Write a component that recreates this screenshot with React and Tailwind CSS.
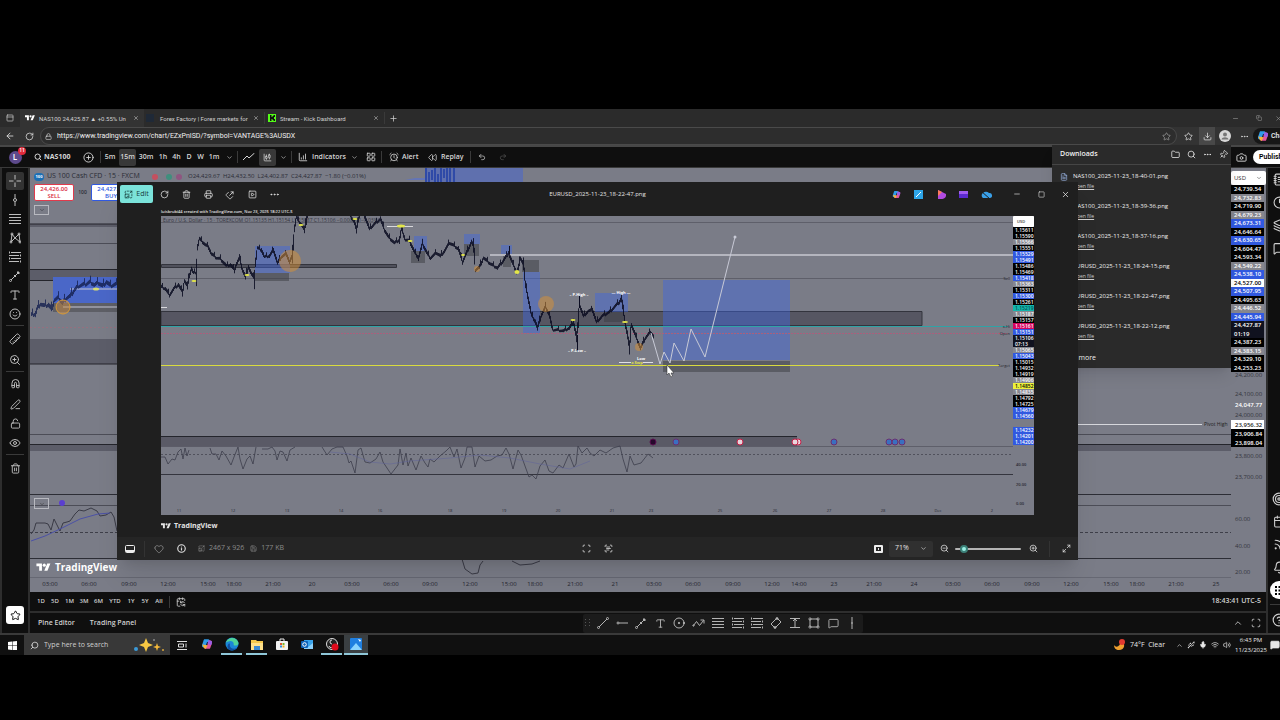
import React, { useState } from "react";
import {
  AlarmClock, ArrowLeft, Camera, Calendar, CalendarSync, ChartCandlestick, ChartColumnIncreasing,
  ChevronDown, ChevronUp, Bell, CircleHelp, CirclePlus, Clock, Copy, Download, Ellipsis, Eye,
  FileText, Folder, Heart, Info, LayoutGrid, Layers, Lock, LockOpen, Magnet, Maximize2, MessageSquare, Mic,
  Minus, NotebookText, PanelTop, PenLine, Pin, Plus, Printer, Redo2, RotateCw, Rss, Ruler, Scan, ScanText,
  Search, Share, Smile, Square, Star, Target, Trash2, Type, Undo2, Volume2, Wifi, X,
  ZoomIn, ZoomOut, Rewind, SquarePlay, Save, ImageUpscale, Usb,
} from "lucide-react";

// Main chart labels, top to bottom: [price, style]
const prices = [
  ["24,739.54", "k"], ["24,732.83", "g"], ["24,719.90", "k"], ["24,679.23", "g"], ["24,673.31", "b"],
  ["24,646.64", "k"], ["24,630.65", "b"], ["24,604.47", "k"], ["24,593.34", "k"], ["24,549.22", "g"],
  ["24,538.10", "b"], ["24,527.00", "w"], ["24,507.95", "b"], ["24,495.63", "k"], ["24,446.52", "g"],
  ["24,445.94", "b"], ["24,427.87", "n"], ["01:19", "n"], ["24,387.23", "k"], ["24,383.15", "g"],
  ["24,329.10", "k"], ["24,253.23", "k"],
];

const viewerPrices = [
  ["1.15611", "k"], ["1.15590", "k"], ["1.15566", "g"], ["1.15551", "k"], ["1.15529", "b"], ["1.15491", "b"],
  ["1.15486", "k"], ["1.15469", "k"], ["1.15418", "b"], ["1.15363", "g"], ["1.15311", "k"], ["1.15300", "b"],
  ["1.15261", "k"], ["1.15219", "t"], ["1.15187", "g"], ["1.15157", "k"], ["1.15161", "p"], ["1.15151", "b"],
  ["1.15106", "n"], ["07:13", "n"], ["1.15065", "g"], ["1.15043", "b"], ["1.15015", "k"], ["1.14932", "k"],
  ["1.14919", "k"], ["1.14906", "g"], ["1.14852", "y"], ["1.14835", "g"], ["1.14792", "k"], ["1.14725", "k"],
  ["1.14679", "b"], ["1.14560", "b"],
];

const tone = {
  k: "bg-black text-white",
  g: "bg-[#85868e] text-white",
  b: "bg-[#3159e0] text-white",
  w: "bg-white text-black",
  n: "bg-[#10121f] text-white",
  t: "bg-[#12b5ac] text-[#08504c]",
  p: "bg-[#d6045f] text-white",
  y: "bg-[#eef03c] text-black",
};

const times = [
  [50, "03:00"], [89, "06:00"], [129, "09:00"], [168, "12:00"], [208, "15:00"], [234, "18:00"], [273, "21:00"],
  [312, "20"], [352, "03:00"], [391, "06:00"], [430, "09:00"], [470, "12:00"], [509, "15:00"], [535, "18:00"],
  [575, "21:00"], [615, "21"], [654, "03:00"], [693, "06:00"], [733, "09:00"], [772, "12:00"], [799, "14:00"],
  [834, "23"], [874, "21:00"], [914, "24"], [953, "03:00"], [992, "06:00"], [1032, "09:00"], [1071, "12:00"],
  [1111, "15:00"], [1137, "18:00"], [1176, "21:00"], [1216, "25"],
];

const days = [
  [179, "11"], [233, "12"], [287, "13"], [341, "14"], [380, "16"], [450, "18"], [504, "19"], [558, "20"],
  [612, "21"], [651, "23"], [720, "25"], [775, "26"], [829, "27"], [883, "28"], [938, "Dec"], [992, "2"],
];

const eurusd = [
  [161, 287], [165, 289], [169, 295], [174, 288], [178, 285], [182, 292], [184, 281], [187, 286], [189, 275],
  [191, 269], [193, 273], [196, 272], [197, 247], [199, 239], [202, 242], [205, 245], [208, 247], [211, 254],
  [216, 258], [220, 259], [226, 266], [230, 265], [234, 270], [236, 264], [239, 258], [242, 270], [245, 277],
  [248, 267], [251, 274], [254, 279], [255, 262], [257, 248], [261, 250], [264, 257], [269, 256], [273, 250],
  [277, 263], [281, 257], [286, 254], [289, 262], [292, 256], [294, 228], [296, 217], [298, 221], [302, 226],
  [304, 230], [306, 220], [309, 200], [346, 200], [350, 216], [354, 222], [356, 230], [358, 219], [361, 208],
  [365, 218], [369, 229], [374, 224], [380, 219], [384, 230], [388, 237], [394, 243], [399, 240], [401, 229],
  [405, 240], [409, 241], [414, 252], [418, 258], [422, 244], [427, 254], [430, 258], [436, 253], [440, 256],
  [444, 251], [449, 243], [454, 246], [458, 249], [462, 262], [466, 253], [471, 242], [473, 246], [475, 270],
  [479, 267], [483, 258], [490, 264], [497, 268], [502, 262], [508, 253], [512, 263], [516, 272], [518, 268],
  [520, 258], [523, 264], [525, 285], [528, 300], [531, 315], [535, 322], [537, 328], [541, 315], [545, 307],
  [549, 315], [552, 330], [557, 330], [563, 331], [569, 328], [573, 322], [576, 337], [578, 320], [579, 305],
  [583, 316], [588, 311], [592, 310], [596, 322], [602, 316], [609, 312], [614, 307], [619, 302], [621, 298],
  [623, 312], [625, 325], [627, 335], [629, 348], [631, 325], [636, 338], [640, 348], [645, 338], [650, 332],
  [654, 338],
];

const nas = [
  [31, 315], [35, 314], [37, 308], [40, 304], [44, 306], [48, 305], [51, 309], [54, 300], [58, 298], [62, 303],
  [66, 298], [70, 296], [74, 290], [78, 286], [82, 285], [86, 284], [90, 282], [94, 285], [98, 283], [102, 286],
  [106, 282], [110, 286], [117, 284],
];

// Rough candles: short bodies along the close line with a longer wick now and then
function candles(points, spread) {
  let d = "";
  for (let i = 0; i < points.length - 1; i++) {
    const [x0, y0] = points[i];
    const [x1, y1] = points[i + 1];
    for (let x = x0; x < x1; x++) {
      const y = y0 + ((y1 - y0) * (x - x0)) / (x1 - x0);
      const step = Math.abs((y1 - y0) / (x1 - x0)) / 2;
      const n = ((x * 7919) % 13) / 13;
      const wick = n > 0.8 ? spread : 0;
      const up = step + 0.4 + n * spread + wick;
      const down = step + 0.4 + (1 - n) * spread * 0.7;
      d += `M${x}.5 ${(y - up).toFixed(1)}V${(y + down).toFixed(1)}`;
    }
  }
  return d;
}

const rsi =
  "161,457 165,457 168,464 172,459 175,460 178,452 181,449 183,459 185,448 187,456 189,450 M210,448 212,454 216,454 219,460 222,451 226,456 231,465 234,457 238,447 240,459 243,469 247,459 250,456 253,464 256,447 M262,449 268,449 272,447 275,451 277,460 280,451 283,452 287,461 290,450 295,447 M322,447 327,455 332,449 337,447 343,447 347,456 349,463 351,461 355,473 358,450 361,448 365,462 370,463 376,459 380,452 383,462 387,468 391,474 398,465 400,449 403,465 406,453 408,466 411,458 416,470 421,456 425,463 428,467 430,459 434,462 440,456 446,451 450,447 454,457 457,449 461,468 465,458 467,447 472,447 475,467 479,456 485,461 491,460 497,456 502,455 506,448 509,454 513,469 518,450 521,455 525,466 529,477 532,475 536,479 540,466 545,460 549,471 553,473 559,465 563,468 569,454 574,467 576,464 578,446 582,453 587,448 590,453 594,456 600,450 606,453 613,448 620,446 623,459 627,472 630,456 634,465 641,463 648,454 653,458";

const toPath = (s) => s.split(" ").map((p) => (p[0] === "M" ? p : "L" + p)).join(" ").replace("L", "M");

function IconBtn({ label, className = "", children }) {
  return (
    <button type="button" aria-label={label} className={`flex shrink-0 items-center justify-center ${className}`}>
      {children}
    </button>
  );
}

const Rule = () => <div className="h-3 w-px shrink-0 bg-[#3a3a3a]" />;

function TvLogo({ className }) {
  return (
    <svg viewBox="0 0 36 28" className={className} fill="currentColor">
      <path d="M14 22H7V11H0V4h14v18zM28 22h-8l7.500-18h8L28 22z" />
      <circle cx="20" cy="8" r="4" />
    </svg>
  );
}

function Copilot({ className }) {
  return (
    <svg viewBox="0 0 20 20" className={className}>
      <path d="M6 2h6c2 0 2.500 2 3 4l-5 1-3 9H5c-3 0-4-2-3-5l2-6c.4-2 1-3 2-3z" fill="#2f9be8" />
      <path d="M14 18H8c-2 0-2.500-2-3-4l5-1 3-9h2c3 0 4 2 3 5l-2 6c-.4 2-1 3-2 3z" fill="#e2559b" />
      <path d="M12 4h3c3 0 4 2 3 5l-1 3-6-2z" fill="#9b5de5" />
      <path d="M2 11l2 4c1 2 2 3 4 3l3-6z" fill="#f3b13c" />
    </svg>
  );
}

function Tabs() {
  return (
    <div className="flex h-[18px] items-center bg-[#2b2b2b] font-['Roboto',sans-serif] text-[6px] text-[#d0d0d0]">
      <IconBtn label="Tab actions" className="w-5"><PanelTop size={8} /></IconBtn>
      <div className="flex h-full w-[124px] items-center bg-[#333] pl-[5px]">
        <TvLogo className="mr-1 h-2 w-[10px] shrink-0 text-white" />
        <span className="w-[89px] whitespace-nowrap">NAS100 24,425.87 ▲ +0.55% Un</span>
        <IconBtn label="Close tab" className="w-4"><X size={6} /></IconBtn>
      </div>
      <div className="flex h-full w-[120px] items-center pl-[2px]">
        <span className="mr-[6px] h-2 w-2 shrink-0 bg-[#1f2937]" />
        <span className="w-[88px] whitespace-nowrap">Forex Factory | Forex markets for</span>
        <IconBtn label="Close tab" className="w-4"><X size={6} /></IconBtn>
      </div>
      <Rule />
      <div className="flex h-full w-[119px] items-center pl-[3px]">
        <svg viewBox="0 0 8 8" className="mr-1 h-2 w-2">
          <path d="M0 0h8v8H0z" fill="#53fc18" />
          <path d="M2 1h1.500v2h1V2h1V1h1.500v2h-1v2h1v2H5.500V6h-1V5h-1v2H2z" fill="#111" />
        </svg>
        <span className="w-[88px] whitespace-nowrap">Stream - Kick Dashboard</span>
        <IconBtn label="Close tab" className="w-4"><X size={6} /></IconBtn>
      </div>
      <Rule />
      <IconBtn label="New tab" className="w-4"><Plus size={9} /></IconBtn>
      <div className="ml-auto flex">
        <IconBtn label="Minimize" className="w-6 text-[#999]"><Minus size={7} /></IconBtn>
        <IconBtn label="Restore" className="w-6 text-[#999]"><Copy size={6} /></IconBtn>
        <div className="flex w-[9px] justify-end overflow-hidden">
          <IconBtn label="Close" className="w-1 text-[#999]"><X size={7} className="shrink-0" /></IconBtn>
        </div>
      </div>
    </div>
  );
}

function AddressBar() {
  return (
    <div className="flex h-5 items-center border-b-2 border-[#474747] bg-[#333] text-[#e2e2e2]">
      <IconBtn label="Back" className="w-5"><ArrowLeft size={10} /></IconBtn>
      <IconBtn label="Reload" className="w-[18px]"><RotateCw size={9} /></IconBtn>
      <div className="ml-[2px] flex h-full min-w-0 flex-1 items-center rounded-full border border-[#4a4a4a] bg-[#2d2d2d] pr-1 pl-1">
        <Lock size={7} className="mr-[5px] shrink-0" />
        <input
          aria-label="Address"
          className="min-w-0 flex-1 bg-transparent font-['Roboto',sans-serif] text-[7px] text-[#f0f0f0] outline-none"
          defaultValue="https://www.tradingview.com/chart/EZxPnISD/?symbol=VANTAGE%3AUSDX"
        />
        <IconBtn label="Favorite" className="w-3 text-[#9a9a9a]"><Star size={9} /></IconBtn>
      </div>
      <IconBtn label="Favorites" className="w-[22px]"><Star size={9} /></IconBtn>
      <IconBtn label="Downloads" className="h-full w-4 bg-[#484848]"><Download size={9} /></IconBtn>
      <IconBtn label="Profile" className="w-5">
        <svg viewBox="0 0 12 12" className="h-3 w-3">
          <circle cx="6" cy="6" r="6" fill="#d8d8d8" />
          <circle cx="6" cy="4.600" r="2" fill="#777" />
          <path d="M2.500 9.500c.5-3 6.500-3 7 0z" fill="#777" />
        </svg>
      </IconBtn>
      <IconBtn label="Settings" className="w-[18px]"><Ellipsis size={9} /></IconBtn>
      <button type="button" className="flex h-4 w-[27px] shrink-0 items-center gap-[2px] overflow-hidden rounded-l-full bg-[#171717] pl-1 font-['Roboto',sans-serif] text-[7px] font-semibold">
        <Copilot className="h-3 w-3 shrink-0" />
        Chat
      </button>
    </div>
  );
}

function TopToolbar() {
  const [frame, setFrame] = useState("15m");
  const frames = [
    ["5m", "w-[18px]"], ["15m", "w-[17px]"], ["30m", "w-5"], ["1h", "w-[14px]"], ["4h", "w-[13px]"],
    ["D", "w-3"], ["W", "w-[11px]"], ["1m", "w-4"],
  ];
  return (
    <div className="flex h-[21px] items-center border-b border-[#3a3a3a] bg-[#0f0f0f] text-[7px] font-semibold text-[#d6d6d6]">
      <button type="button" aria-label="Account" className="relative flex w-[30px] justify-center">
        <span className="flex h-[13px] w-[13px] items-center justify-center rounded-full bg-[#5d4a8c] text-[8px] text-white">L</span>
        <span className="absolute -top-1 left-[18px] flex h-2 w-2 items-center justify-center rounded-full bg-[#e0293a] text-[5px] text-white">11</span>
      </button>
      <button type="button" className="flex w-[46px] items-center gap-[2px] pl-1 font-bold"><Search size={8} strokeWidth={3} />NAS100</button>
      <IconBtn label="Compare" className="w-6"><CirclePlus size={11} /></IconBtn>
      <Rule />
      {frames.map(([f, w]) => (
        <button
          key={f}
          type="button"
          onClick={() => setFrame(f)}
          className={`${w} h-[17px] shrink-0 rounded-[2px] text-center ${frame === f ? "bg-[#383838]" : ""}`}
        >
          {f}
        </button>
      ))}
      <IconBtn label="More intervals" className="w-[15px]"><ChevronDown size={7} /></IconBtn>
      <Rule />
      <IconBtn label="Line" className="w-[21px]">
        <svg viewBox="0 0 12 8" className="h-2 w-3" fill="none" stroke="currentColor"><path d="M0 7l4-4 2 2 5.500-5" /></svg>
      </IconBtn>
      <IconBtn label="Candles" className="h-[17px] w-[17px] rounded-[2px] bg-[#383838]"><ChartCandlestick size={9} /></IconBtn>
      <IconBtn label="Chart type" className="w-[15px]"><ChevronDown size={7} /></IconBtn>
      <Rule />
      <button type="button" className="flex w-[57px] items-center gap-1 pl-[6px]"><ChartColumnIncreasing size={10} />Indicators</button>
      <IconBtn label="Favorite indicators" className="w-[11px]"><ChevronDown size={7} /></IconBtn>
      <IconBtn label="Templates" className="w-[21px]"><LayoutGrid size={10} /></IconBtn>
      <Rule />
      <button type="button" className="flex w-[43px] items-center gap-[3px] pl-[7px]"><AlarmClock size={10} />Alert</button>
      <button type="button" className="flex w-[45px] items-center gap-1 pl-[3px]"><Rewind size={9} className="-scale-x-100 rotate-180" />Replay</button>
      <Rule />
      <IconBtn label="Undo" className="w-[22px]"><Undo2 size={8} /></IconBtn>
      <IconBtn label="Redo" className="w-5 text-[#555]"><Redo2 size={8} /></IconBtn>
      <div className="ml-auto flex items-center">
        <IconBtn label="Snapshot" className="w-6"><Camera size={11} /></IconBtn>
        <button type="button" className="h-[14px] w-[27px] overflow-hidden rounded-l-full bg-white pl-[6px] text-left font-['Roboto',sans-serif] text-black">Publish</button>
      </div>
    </div>
  );
}

function FibIcon({ dots, size = "h-3 w-3" }) {
  return (
    <svg viewBox="0 0 12 12" className={size} fill="none" stroke="currentColor">
      {dots ? (
        <path d="M2 1.500h10M0 4.500h10M2 7.500h10M0 10.500h10" />
      ) : (
        <path d="M0 1.500h12M0 4.500h12M0 7.500h12M0 10.500h12" />
      )}
      {dots && <path d="M0 1.500h1M11 4.500h1M0 7.500h1M11 10.500h1" strokeWidth="2" />}
    </svg>
  );
}

function PatternIcon() {
  return (
    <svg viewBox="0 0 12 12" className="h-3 w-3" fill="none" stroke="currentColor">
      <path d="M2 10L3 2l3 4 4-4 1 8-5-4-4 4z" />
      <circle cx="2" cy="10" r="1" /><circle cx="3" cy="2" r="1" /><circle cx="10" cy="2" r="1" /><circle cx="11" cy="10" r="1" />
    </svg>
  );
}

function TrendIcon({ arrow }) {
  return (
    <svg viewBox="0 0 12 12" className="h-3 w-3" fill="none" stroke="currentColor">
      <path d="M2 10l8-8" />
      {arrow ? <path d="M8 2h2v2zM5 5l2 2" fill="currentColor" /> : null}
      <circle cx="1.500" cy="10.500" r="1" />
      {!arrow && <circle cx="10.500" cy="1.500" r="1" />}
    </svg>
  );
}

function LeftToolbar() {
  const cell = "h-[19px] w-[18px]";
  const line = "my-[2px] h-px w-[18px] bg-[#3a3a3a]";
  return (
    <aside className="flex w-[30px] shrink-0 flex-col items-center border-r-2 border-l-2 border-[#2e2e2e] bg-[#0f0f0f] pt-1 text-[#bdbdbd]">
      <IconBtn label="Cursor" className="h-[18px] w-[18px] rounded-[2px] bg-[#333]">
        <svg viewBox="0 0 12 12" className="h-3 w-3" stroke="currentColor"><path d="M6 0v4.500M6 7.500V12M0 6h4.500M7.500 6H12" /></svg>
      </IconBtn>
      <IconBtn label="Vertical line" className={cell}>
        <svg viewBox="0 0 12 12" className="h-3 w-3" stroke="currentColor" fill="none"><path d="M6 0v4M6 8v4" /><circle cx="6" cy="6" r="1.500" /></svg>
      </IconBtn>
      <IconBtn label="Fib retracement" className={cell}><FibIcon /></IconBtn>
      <IconBtn label="Patterns" className={cell}><PatternIcon /></IconBtn>
      <IconBtn label="Projection" className={cell}><FibIcon dots /></IconBtn>
      <IconBtn label="Brush" className={cell}><TrendIcon arrow /></IconBtn>
      <IconBtn label="Text" className={cell}><Type size={12} /></IconBtn>
      <IconBtn label="Icons" className={cell}><Smile size={12} /></IconBtn>
      <div className={line} />
      <IconBtn label="Measure" className="h-[22px] w-[18px]"><Ruler size={12} className="rotate-90" /></IconBtn>
      <IconBtn label="Zoom in" className={cell}><ZoomIn size={12} /></IconBtn>
      <div className={line} />
      <IconBtn label="Magnet" className="h-[21px] w-[18px]"><Magnet size={11} className="-rotate-45" /></IconBtn>
      <IconBtn label="Stay in drawing mode" className={cell}><PenLine size={11} /></IconBtn>
      <IconBtn label="Lock drawings" className={cell}><LockOpen size={11} /></IconBtn>
      <IconBtn label="Hide drawings" className={cell}><Eye size={12} /></IconBtn>
      <div className={line} />
      <IconBtn label="Remove" className="h-[22px] w-[18px]"><Trash2 size={11} /></IconBtn>
      <IconBtn label="Favorites toolbar" className="mt-auto mb-[9px] h-[18px] w-[18px] rounded-[3px] bg-white text-black"><Star size={11} /></IconBtn>
    </aside>
  );
}

function MainChart() {
  return (
    <svg viewBox="30 168 1201 409" preserveAspectRatio="xMinYMin slice" className="block h-[409px] w-full bg-[#7a7c87]">
      <path d="M30 224h1201v3H30zM30 269h1201v12H30zM30 339h1201v25H30zM30 445h1201v6H30z" fill="#5c5d69" />
      <path d="M30 224h1201M30 269.500h1201M30 280.500h1201M30 364h1201M30 444.500h1201" stroke="#24252c" />
      <path d="M30 243.500h1201M30 434.500h1201M30 505.500h1201" stroke="#4c4d57" />
      <path d="M405 180h20v-2h-10z" fill="#6475b5" />
      <path d="M425 168h98v16h-98z" fill="#5f70ae" />
      <path d="M426 168v15M429 172v12M432 170v10M435 168v14M438 174v9M441 168v15M444 169v9M447 168v15M450 168v15M454 168v16" stroke="#1c3aa5" strokeWidth="2" opacity="0.7" />
      <rect x="53" y="277" width="70" height="26" fill="#4a67c8" />
      <rect x="53" y="303" width="70" height="9" fill="#5e5f66" />
      <path d="M70 289h50M63 307h60" stroke="#c4c6d4" />
      <path d={candles(nas, 3)} stroke="#152050" opacity="0.8" />
      <circle cx="63" cy="307" r="7" fill="#c98a3f" fillOpacity="0.5" stroke="#d99a35" />
      <ellipse cx="96" cy="289" rx="3" ry="1.500" fill="#d7dc72" />
      <path d="M30 327.500h90" stroke="#94707f" strokeDasharray="2 2" />
      <path d="M1070 424.500h132" stroke="#d6d7dc" />
      <text x="1204" y="426" fontSize="5" fill="#222">Pivot High</text>
      <path d="M30 494.500h1201M30 558.500h1201" stroke="#2c2d35" />
      <path d="M30 532.500h1201" stroke="#3e3f49" strokeDasharray="3 2" />
      <path d="M31 534l3-4 2-7h9l3 1 3 6 3-11 3 6 3 6 3-8 4-1 3-1 5-7 4-4 5 1 7-3 6 3 3 5 6-1 5-3 3 5 3 14" fill="none" stroke="#3a3b46" />
      <path d="M31 541l14-5 15-7 20-10 18-5 12-1" fill="none" stroke="#4b51a6" />
      <path d="M462 559l3 10 7 5 6-1 2-8 3-4M512 561l8 4 12-1 8-3" fill="none" stroke="#3a3b46" />
    </svg>
  );
}

function PriceAxis() {
  return (
    <div className="flex h-[424px] w-[35px] shrink-0 flex-col bg-[#7a7c87] text-[6px] text-[#33343c]">
      <div className="flex h-[17px] items-end">
        <div className="relative h-[14px] w-full rounded-[2px] bg-white text-[#333]">
          <select aria-label="Currency" className="block h-full w-full appearance-none pl-[3px] text-[6px]">
            <option>USD</option>
          </select>
          <ChevronDown size={6} className="absolute top-1 right-1" />
        </div>
      </div>
      <div className="flex h-[187px] w-[33px] flex-col">
        {prices.map(([p, t]) => (
          <div key={p} className={`flex min-h-0 flex-1 items-center pl-[3px] leading-none font-semibold ${tone[t]}`}>{p}</div>
        ))}
      </div>
      <div className="flex flex-col pl-1">
        <span className="h-[7px] leading-[7px]">24,200.00</span>
        <span className="h-[21px] pt-[11px] leading-[9px]">24,100.00</span>
        <span className="h-[10px] leading-[10px] font-semibold text-white">24,047.77</span>
        <span className="h-[10px] leading-[10px]">24,000.00</span>
      </div>
      <div className="flex w-[33px] flex-col leading-none font-semibold">
        <span className="flex h-[9px] items-center bg-white pl-1 text-[#222]">23,956.32</span>
        <span className="flex h-[9px] items-center bg-black pl-1 text-white">23,906.84</span>
        <span className="flex h-[9px] items-center bg-black pl-1 text-white">23,898.04</span>
      </div>
      <div className="flex flex-1 flex-col pl-1 leading-3">
        <span className="h-6 pt-[3px]">23,800.00</span>
        <span className="h-[42px]">23,700.00</span>
        <span className="h-[27px]">60.00</span>
        <span className="h-[26px]">40.00</span>
        <span>20.00</span>
      </div>
    </div>
  );
}

function ChartHeader() {
  return (
    <div className="absolute top-0 left-0 pt-[3px] pl-1 text-[7px] whitespace-nowrap text-[#2b2c36]">
      <div className="flex h-[11px] items-center">
        <span className="mr-[3px] h-2 w-[10px] rounded-full bg-[#1b6fb5] text-center text-[4px] leading-2 font-bold text-white">100</span>
        <span className="w-[105px]">US 100 Cash CFD · 15 · FXCM</span>
        <span className="mr-2 h-[6px] w-[6px] rounded-full bg-[#c4505f]" />
        <span className="mr-1 h-[6px] w-[6px] rounded-full bg-[#3f8f7d]" />
        <span className="mr-[6px] h-[6px] w-[6px] rounded-full bg-[#8f5580]" />
        <span className="text-[6px]">O24,429.67&nbsp; H24,432.50&nbsp; L24,402.87&nbsp; C24,427.87&nbsp; −1.80 (−0.01%)</span>
      </div>
      <div className="mt-[2px] flex items-center text-center text-[6px] leading-[7px] font-semibold">
        <button type="button" className="h-[17px] w-10 rounded-[2px] border border-[#e03a4c] bg-white text-[#d8283c]">24,426.00<br />SELL</button>
        <span className="w-[17px] text-[5px]">100</span>
        <button type="button" className="h-[17px] w-10 rounded-[2px] border border-[#3159e0] bg-white text-[#3159e0]">24,427.80<br />BUY</button>
      </div>
      <IconBtn label="Collapse" className="mt-1 h-[10px] w-[15px] border border-[#b8b9c0]"><ChevronDown size={6} /></IconBtn>
    </div>
  );
}

function RightToolbar() {
  const cell = "h-[23px] w-[18px]";
  return (
    <aside className="flex w-[14px] shrink-0 flex-col overflow-hidden border-l-2 border-[#2e2e2e] bg-[#0f0f0f] pl-[2px] text-[#cfcfcf]">
      <IconBtn label="Watchlist" className={cell}><NotebookText size={13} /></IconBtn>
      <IconBtn label="Alerts" className={cell}><Clock size={13} /></IconBtn>
      <IconBtn label="Object tree" className={cell}><Layers size={13} /></IconBtn>
      <IconBtn label="Chats" className={cell}><MessageSquare size={13} /></IconBtn>
      <div className="mt-auto flex flex-col pb-[2px]">
        <IconBtn label="Screener" className={cell}><Target size={14} /></IconBtn>
        <IconBtn label="Calendar" className={cell}><Calendar size={13} /></IconBtn>
        <IconBtn label="News" className={cell}><Rss size={13} /></IconBtn>
        <IconBtn label="Notifications" className={cell}><Bell size={13} /></IconBtn>
        <IconBtn label="Products" className="my-[2px] h-[18px] w-[18px] rounded-full bg-white text-black">
          <svg viewBox="0 0 9 9" className="h-[9px] w-[9px]" fill="currentColor">
            <path d="M0 0h2v2H0zM3.500 0h2v2h-2zM7 0h2v2H7zM0 3.500h2v2H0zM3.500 3.500h2v2h-2zM7 3.500h2v2H7zM0 7h2v2H0zM3.500 7h2v2h-2zM7 7h2v2H7z" />
          </svg>
        </IconBtn>
        <div className="my-[3px] h-px w-[18px] bg-[#3a3a3a]" />
        <IconBtn label="Help" className={cell}><CircleHelp size={14} /></IconBtn>
      </div>
    </aside>
  );
}

function DrawingBar() {
  const cell = "h-full w-[19px]";
  return (
    <div className="flex h-[19px] w-[280px] shrink-0 items-center rounded-[2px] bg-[#1b1b1b] text-[#b4b4b4]">
      <svg viewBox="0 0 6 9" className="mr-[3px] ml-[2px] h-[9px] w-[6px] shrink-0" fill="#555">
        <path d="M0 0h1v1H0zM4 0h1v1H4zM0 3h1v1H0zM4 3h1v1H4zM0 6h1v1H0zM4 6h1v1H4z" />
      </svg>
      <IconBtn label="Trend line" className={cell}><TrendIcon /></IconBtn>
      <IconBtn label="Horizontal ray" className={cell}>
        <svg viewBox="0 0 12 12" className="h-3 w-3" fill="none" stroke="currentColor"><path d="M3 6h9" /><circle cx="2" cy="6" r="1" /></svg>
      </IconBtn>
      <IconBtn label="Arrow" className={cell}><TrendIcon arrow /></IconBtn>
      <IconBtn label="Text" className={cell}><Type size={11} /></IconBtn>
      <IconBtn label="Circle" className={cell}>
        <svg viewBox="0 0 12 12" className="h-3 w-3" fill="none" stroke="currentColor"><circle cx="6" cy="6" r="5" /><circle cx="6" cy="6" r=".7" fill="currentColor" /><circle cx="11" cy="6" r=".7" fill="currentColor" /></svg>
      </IconBtn>
      <IconBtn label="Path" className="h-full w-5">
        <svg viewBox="0 0 13 12" className="h-3 w-[13px]" fill="none" stroke="currentColor"><path d="M1.500 8.500l3-4 3 4 4-5M8.500 3h3.500v3.500" /><circle cx="1.500" cy="8.500" r=".7" /></svg>
      </IconBtn>
      <IconBtn label="Fib" className={cell}><FibIcon /></IconBtn>
      <IconBtn label="Long position" className="h-full w-[20px]"><FibIcon dots /></IconBtn>
      <IconBtn label="Short position" className={cell}><FibIcon dots /></IconBtn>
      <IconBtn label="Rotated rectangle" className={cell}>
        <svg viewBox="0 0 12 12" className="h-3 w-3" fill="none" stroke="currentColor"><path d="M1 7l6-6 4 4-6 6z" /><circle cx="7" cy="1.500" r="1" /><circle cx="5" cy="10.500" r="1" /></svg>
      </IconBtn>
      <IconBtn label="Price range" className={cell}>
        <svg viewBox="0 0 12 12" className="h-3 w-3" fill="none" stroke="currentColor"><path d="M1 1.500h10M1 10.500h10M6 2v8M4 4l2-2 2 2" /></svg>
      </IconBtn>
      <IconBtn label="Rectangle" className={cell}>
        <svg viewBox="0 0 12 12" className="h-3 w-3" fill="none" stroke="currentColor"><path d="M2 2h8v8H2z" /><path d="M1 1h2v2H1zM9 1h2v2H9zM1 9h2v2H1zM9 9h2v2H9z" strokeWidth=".7" /></svg>
      </IconBtn>
      <IconBtn label="Callout" className={cell}><MessageSquare size={11} /></IconBtn>
      <IconBtn label="Vertical line" className={cell}>
        <svg viewBox="0 0 12 12" className="h-3 w-3" fill="none" stroke="currentColor"><path d="M6 0v12M5 6h2" /></svg>
      </IconBtn>
    </div>
  );
}

function ChartFooter() {
  const ranges = [
    ["1D", "w-[14px]"], ["5D", "w-[14px]"], ["1M", "w-[15px]"], ["3M", "w-[14px]"], ["6M", "w-[15px]"],
    ["YTD", "w-[18px]"], ["1Y", "w-[14px]"], ["5Y", "w-[14px]"], ["All", "w-[14px]"],
  ];
  return (
    <div className="bg-[#0f0f0f] font-semibold text-[#cfcfcf]">
      <div className="flex h-[21px] items-center border-b-2 border-[#2e2e2e] pl-1 text-[6px]">
        {ranges.map(([r, w]) => (
          <button key={r} type="button" className={`${w} text-center`}>{r}</button>
        ))}
        <div className="ml-[3px] h-3 w-px bg-[#3a3a3a]" />
        <IconBtn label="Go to date" className="w-[22px]"><CalendarSync size={10} /></IconBtn>
        <span className="ml-auto pr-[5px] text-[7px]">18:43:41 UTC-5</span>
      </div>
      <div className="flex h-5 items-center text-[7px]">
        <div className="flex grow-[552] basis-0 gap-[15px] pl-2">
          <button type="button">Pine Editor</button>
          <button type="button">Trading Panel</button>
        </div>
        <DrawingBar />
        <div className="flex grow-[404] basis-0 justify-end gap-2 pr-[5px]">
          <IconBtn label="Expand panel"><ChevronUp size={10} /></IconBtn>
          <IconBtn label="Maximize panel"><Scan size={10} /></IconBtn>
        </div>
      </div>
    </div>
  );
}

function Downloads() {
  const files = [
    "NAS100_2025-11-23_18-40-01.png", "NAS100_2025-11-23_18-39-36.png", "NAS100_2025-11-23_18-37-16.png",
    "EURUSD_2025-11-23_18-24-15.png", "EURUSD_2025-11-23_18-22-47.png", "EURUSD_2025-11-23_18-22-12.png",
  ];
  return (
    <section className="absolute top-[36px] right-[49px] z-10 h-[223px] w-[179px] bg-[#2a2a2a] text-[6px] text-[#f0f0f0] shadow-lg">
      <header className="flex h-5 items-center border-b border-[#454545] pl-2">
        <h2 className="flex-1 text-[7px] font-semibold">Downloads</h2>
        <IconBtn label="Open folder" className="w-4"><Folder size={9} /></IconBtn>
        <IconBtn label="Search downloads" className="w-4"><Search size={9} /></IconBtn>
        <IconBtn label="More" className="w-4"><Ellipsis size={9} /></IconBtn>
        <IconBtn label="Pin" className="w-4"><Pin size={9} className="rotate-45" /></IconBtn>
      </header>
      <ul className="pt-[7px]">
        {files.map((f) => (
          <li key={f} className="flex h-[30px] gap-[5px] pl-2">
            <FileText size={8} className="mt-px text-[#9db8e8]" />
            <div className="flex flex-col items-start gap-[2px] leading-2">
              <span>{f}</span>
              <a href="#open" className="text-[5px] text-[#cfcfcf] underline">Open file</a>
            </div>
          </li>
        ))}
      </ul>
      <a href="#more" className="ml-[13px] block text-[7px] leading-3">See more</a>
    </section>
  );
}

function ViewerChart() {
  return (
    <svg viewBox="161 216 852 299" preserveAspectRatio="xMinYMin slice" className="block h-[299px] min-w-0 flex-1" fontFamily="Open Sans, sans-serif">
      <text x="163" y="222" fontSize="5" fill="#34353f">Euro / U.S. Dollar · 15 · TOREXCOM  O1.15135  H1.15154  L1.15087  C1.15106  −0.00030 (−0.03%)</text>
      <path d="M161 222.500h852M161 278.500h847M161 446.500h852" stroke="#5e5f6a" />
      <path d="M161.500 264.500h235v3h-235z" fill="#50515c" stroke="#33343d" />
      <path d="M161 311.500h761v14H161z" fill="#565662" stroke="#33343d" />
      <path d="M161 436.500h636v10H161z" fill="#5a5a66" />
      <path d="M161 436.500h636" stroke="#24252c" />
      <g fill="#3f66e0" fillOpacity="0.45">
        <path d="M255 246h35v27h-35zM414 236h13v15h-13zM464 234h16v10h-16zM501 245h11v10h-11zM523 272h17v61h-17zM595 293h33v19h-33z" />
        <path d="M663 280h127v80H663z" />
      </g>
      <g fill="#3a3b42" fillOpacity="0.5">
        <path d="M255 273h34v8h-34zM411 251h14v12h-14zM464 244h15v12h-15zM503 255h8v12h-8zM522 260h17v12h-17zM604 312h20v10h-20zM663 361h127v11H663z" />
      </g>
      <path d="M490 255h523" stroke="#b4b5be" strokeWidth="2" />
      <path d="M161 326.500h847" stroke="#2fa3a6" />
      <path d="M161 333.500h847" stroke="#ab5f7c" strokeDasharray="2 1" />
      <path d="M161 365.500h838" stroke="#d9db3e" />
      <path d="M161 307.500h6M387 226.500h26" stroke="#d8d8dc" />
      <path d={candles(eurusd, 2)} stroke="#0b0d22" opacity="0.85" />
      <path d="M577.500 335v17M579.500 296v12M509.500 246v8" stroke="#0b0d22" />
      <g fill="#d99233" fillOpacity="0.5">
        <circle cx="290" cy="261" r="11" />
        <circle cx="546" cy="304" r="8" />
        <circle cx="639" cy="347" r="4" />
        <circle cx="477" cy="269" r="3" />
      </g>
      <g fill="#e3e64a">
        <ellipse cx="194" cy="281" rx="2.500" ry="1" />
        <ellipse cx="247" cy="275" rx="2.500" ry="1" />
        <ellipse cx="301" cy="225" rx="2.500" ry="1" />
        <ellipse cx="355" cy="219" rx="2.500" ry="1" />
        <ellipse cx="401" cy="226" rx="4" ry="1.500" />
        <ellipse cx="410" cy="241" rx="2.500" ry="1" />
        <ellipse cx="463" cy="255" rx="2" ry="1" />
        <ellipse cx="517" cy="272" rx="2.500" ry="2" />
        <ellipse cx="573" cy="320" rx="2.500" ry="1" />
        <ellipse cx="625" cy="322" rx="3" ry="1" />
      </g>
      <path d="M619 362.500h12M643 362.500h10" stroke="#e0e0e4" />
      <g fontSize="4" fontWeight="700" fill="#fff" textAnchor="middle">
        <text x="579" y="296">– P-High –</text>
        <text x="621" y="294">— High —</text>
        <text x="577" y="352">– P-Low –</text>
        <text x="641" y="360">Low</text>
        <text x="637" y="364" fill="#e3e64a">x Swp</text>
      </g>
      <path d="M651 333l9 31 4-12 6 11 4-20 10 18 7-32 14 28 30-120" fill="none" stroke="#c8cad6" />
      <circle cx="735" cy="237" r="1.500" fill="#c8cad6" />
      <g fontSize="4" fill="#22232a" textAnchor="end">
        <text x="1010" y="280">Sell</text>
        <text x="1010" y="328">x-Hi</text>
        <text x="1010" y="335">Open</text>
        <text x="1010" y="367">Target</text>
      </g>
      <path d="M161 474.500h852" stroke="#34353e" />
      <path d="M161 454.500h852" stroke="#50515c" strokeDasharray="2 2" />
      <path d={toPath(rsi)} fill="none" stroke="#3c3d4b" strokeWidth="0.800" />
      <path d="M330 452l20 2 20 8 20 2 20-3 40-3 30-3 30 3 30 6 30 5 20-8" fill="none" stroke="#5f639b" strokeWidth="0.500" />
      <circle cx="653" cy="442" r="3" fill="#26082c" stroke="#5b1050" />
      <g fill="#3a6fc0" stroke="#6b2f70">
        <circle cx="676" cy="442" r="3" /><circle cx="834" cy="442" r="3" /><circle cx="889" cy="442" r="3" /><circle cx="895" cy="442" r="3" /><circle cx="902" cy="442" r="3" />
      </g>
      <g fill="#e8d5dc" stroke="#c62048">
        <circle cx="740" cy="442" r="3" /><circle cx="798" cy="442" r="3" /><circle cx="795" cy="442" r="3" />
      </g>
      <g fontSize="4" fill="#24252e" textAnchor="middle">
        {days.map(([x, d]) => <text key={x} x={x} y="512">{d}</text>)}
      </g>
      <path d="M667 365v10l2-2 2 4 1.500-1-1.500-3h3z" fill="#fff" stroke="#222" strokeWidth="0.500" />
    </svg>
  );
}

function PhotoViewer() {
  const [zoom, setZoom] = useState(14);
  return (
    <section className="absolute top-[73px] right-[202px] left-[117px] z-20 flex flex-col bg-[#1f1f1f] text-[#e4e4e4] shadow-xl">
      <header className="grid h-6 grid-cols-[1fr_auto_1fr] items-center">
        <div className="flex items-center pl-[3px]">
          <button type="button" className="flex h-[18px] w-[33px] items-center justify-center gap-[3px] rounded-[2px] bg-[#7be3da] text-[7px] text-[#153c3a]">
            <ImageUpscale size={9} />Edit
          </button>
          <IconBtn label="Rotate" className="w-[22px]"><RotateCw size={9} /></IconBtn>
          <IconBtn label="Delete" className="w-[22px]"><Trash2 size={9} /></IconBtn>
          <IconBtn label="Print" className="w-[22px]"><Printer size={9} /></IconBtn>
          <IconBtn label="Share" className="w-[22px]"><Share size={9} className="rotate-45" /></IconBtn>
          <IconBtn label="Slideshow" className="w-[22px]"><SquarePlay size={9} /></IconBtn>
          <IconBtn label="More" className="w-[22px]"><Ellipsis size={11} /></IconBtn>
        </div>
        <h1 className="text-[6px]">EURUSD_2025-11-23_18-22-47.png</h1>
        <div className="flex items-center justify-end">
          <IconBtn label="Copilot" className="w-[22px]"><Copilot className="h-[9px] w-[9px]" /></IconBtn>
          <IconBtn label="Designer" className="w-[23px]">
            <svg viewBox="0 0 9 9" className="h-[9px] w-[9px]"><path d="M0 0h9v9H0z" fill="#2da5e8" /><path d="M2 7l5-5" stroke="#fff" /></svg>
          </IconBtn>
          <IconBtn label="Clipchamp" className="w-[22px]">
            <svg viewBox="0 0 9 9" className="h-[9px] w-[9px]"><path d="M1 0l8 4a4 4 0 0 1-4 5H1z" fill="#b14be0" /><path d="M1 0l4 2-4 4z" fill="#ff7a59" /></svg>
          </IconBtn>
          <IconBtn label="Video editor" className="w-[22px]">
            <svg viewBox="0 0 9 9" className="h-[9px] w-[9px]"><path d="M0 1h9v3H0z" fill="#a05cf0" /><path d="M0 4h9v4H0z" fill="#5b2bd0" /></svg>
          </IconBtn>
          <IconBtn label="OneDrive" className="mr-[8px] w-[23px]">
            <svg viewBox="0 0 12 9" className="h-[9px] w-3"><path d="M3 8a3 3 0 0 1 0-5 4 4 0 0 1 6 0 2.500 2.500 0 0 1 1 5z" fill="#3aa0e8" /><path d="M1 1l9 8" stroke="#1f1f1f" /></svg>
          </IconBtn>
          <IconBtn label="Minimize" className="w-6"><Minus size={8} /></IconBtn>
          <IconBtn label="Maximize" className="w-6"><Square size={7} /></IconBtn>
          <IconBtn label="Close" className="w-[25px]"><X size={9} /></IconBtn>
        </div>
      </header>
      <figure className="px-11">
        <figcaption className="h-[10px] text-[4px] leading-[11px] font-semibold">luisbrubi44 created with TradingView.com, Nov 23, 2025 18:22 UTC-5</figcaption>
        <div className="flex bg-[#7a7c87]">
          <ViewerChart />
          <div className="w-[21px] shrink-0 text-[5px] font-semibold">
            <div className="h-[11px] rounded-[1px] bg-white pl-1 text-[4px] leading-[11px] text-[#333]">USD</div>
            {viewerPrices.map(([p, t]) => (
              <div key={p} className={`h-[6px] pl-[2px] leading-[6px] ${tone[t]}`}>{p}</div>
            ))}
            <div className="mt-2 bg-[#3159e0] pl-[2px] leading-[6px] text-white">1.14232<br />1.14201<br />1.14200</div>
            <div className="flex flex-col pt-[17px] pl-[3px] text-[4px] leading-[6px] text-[#24252e]">
              <span className="h-5">40.00</span>
              <span className="h-[19px]">20.00</span>
              <span>0.00</span>
            </div>
          </div>
        </div>
        <div className="flex h-[22px] items-center gap-[3px] text-[7px] font-bold"><TvLogo className="h-2 w-[10px]" />TradingView</div>
      </figure>
      <footer className="grid h-[23px] grid-cols-[1fr_auto_1fr] items-center bg-[#252525] text-[7px]">
        <div className="flex items-center pl-[2px]">
          <IconBtn label="Filmstrip" className="w-[22px]">
            <svg viewBox="0 0 10 8" className="h-2 w-[10px]"><rect x=".5" y=".5" width="9" height="7" rx="1" fill="none" stroke="#eee" /><path d="M1 5h8v2H1z" fill="#eee" /></svg>
          </IconBtn>
          <div className="mx-[3px] h-4 w-px bg-[#333]" />
          <IconBtn label="Favorite" className="w-[22px] text-[#888]"><Heart size={10} /></IconBtn>
          <IconBtn label="Info" className="w-[22px]"><Info size={9} strokeWidth={3} /></IconBtn>
          <span className="flex items-center gap-1 pl-[6px] text-[#8a8a8a]"><ImageUpscale size={7} />2467 x 926</span>
          <span className="flex items-center gap-1 pl-[6px] text-[#8a8a8a]"><Save size={7} />177 KB</span>
        </div>
        <div className="flex">
          <IconBtn label="Visual search" className="w-[22px]"><Scan size={9} /></IconBtn>
          <IconBtn label="Scan text" className="w-[22px]"><ScanText size={9} /></IconBtn>
        </div>
        <div className="flex items-center justify-end">
          <IconBtn label="Fit" className="w-[21px]">
            <svg viewBox="0 0 9 8" className="h-2 w-[9px]"><rect width="9" height="8" rx="1" fill="#eee" /><path d="M2 2h5v4H2z" fill="#252525" /><path d="M4 3h1v2H4z" fill="#eee" /></svg>
          </IconBtn>
          <button type="button" className="flex h-4 w-11 items-center justify-between rounded-[2px] bg-[#303030] px-[6px]">71%<ChevronDown size={7} /></button>
          <IconBtn label="Zoom out" className="w-[22px]"><ZoomOut size={9} /></IconBtn>
          <label className="relative flex h-3 w-[66px] items-center">
            <span className="h-[2px] w-full rounded-full bg-[#b4b4b4]" />
            <span className="absolute h-2 w-2 -translate-x-1/2 rounded-full border-2 border-[#3c8078] bg-[#9af0e4]" style={{ left: `${zoom}%` }} />
            <input type="range" aria-label="Zoom" min="0" max="100" value={zoom} onChange={(e) => setZoom(e.target.value)} className="absolute inset-0 w-full opacity-0" />
          </label>
          <IconBtn label="Zoom in" className="w-6"><ZoomIn size={9} /></IconBtn>
          <div className="mx-1 h-4 w-px bg-[#333]" />
          <IconBtn label="Full screen" className="w-6"><Maximize2 size={9} /></IconBtn>
        </div>
      </footer>
    </section>
  );
}

function Taskbar() {
  const cell = "h-full w-[25px] border-b-2 border-transparent";
  const open = "h-full w-[21px] mx-[2px] border-b-2 border-[#8fc7d8]";
  return (
    <div className="flex h-5 items-center bg-[#101010] text-[7px] text-[#e8e8e8]">
      <IconBtn label="Start" className="w-6">
        <svg viewBox="0 0 9 9" className="h-[9px] w-[9px]" fill="#fff"><path d="M0 1l4-.5v4H0zM4.500.5L9 0v4.500H4.500zM0 5h4v4l-4-.5zM4.500 5H9v4.500L4.500 9z" /></svg>
      </IconBtn>
      <label className="flex h-5 w-[146px] items-center bg-[#383838] pl-[6px]">
        <Search size={9} className="mr-[5px] -scale-x-100" />
        <input aria-label="Search" placeholder="Type here to search" className="w-[90px] bg-transparent text-[7px] outline-none placeholder:text-[#cfcfcf]" />
        <svg viewBox="0 0 32 14" className="h-[14px] w-8">
          <path d="M12 0l2 5 5 2-5 2-2 5-2-5-5-2 5-2z" fill="#f7c843" />
          <path d="M23 5l1 3 3 1-3 1-1 3-1-3-3-1 3-1z" fill="#f5b93a" />
          <circle cx="2" cy="11" r="2" fill="#3b9ad8" /><circle cx="20" cy="2" r="1" fill="#888" /><circle cx="29" cy="12" r="1" fill="#d8a53a" />
        </svg>
      </label>
      <IconBtn label="Task view" className="w-6">
        <svg viewBox="0 0 10 9" className="h-[9px] w-[10px]" fill="none" stroke="#ddd"><path d="M0 .5h10M0 8.500h10M1.500 3h5v3h-5zM9 2.500v4" /></svg>
      </IconBtn>
      <IconBtn label="Copilot" className={cell}><Copilot className="h-3 w-3" /></IconBtn>
      <IconBtn label="Edge" className={open}>
        <svg viewBox="0 0 14 14" className="h-[14px] w-[14px]"><circle cx="7" cy="7" r="6.500" fill="#1b86d8" /><path d="M1 6c1-6 11-7 12.500 0 0 3-4 3-5 2 1-2-1-4-3-4S1 5 1 6z" fill="#4fd39a" /><path d="M5 7c-1 3 2 6 7 4-3 4-10 3-9.500-2C3 7 4 6 5 7z" fill="#0f4fa0" /></svg>
      </IconBtn>
      <IconBtn label="File Explorer" className={open}>
        <svg viewBox="0 0 12 11" className="h-[11px] w-3"><path d="M0 1h5l1 1h6v9H0z" fill="#f5c84c" /><path d="M0 4h12v7H0z" fill="#ffe08a" /><path d="M3 7h6v4H3z" fill="#3c8ad0" /></svg>
      </IconBtn>
      <IconBtn label="Store" className={cell}>
        <svg viewBox="0 0 12 12" className="h-3 w-3"><path d="M4 3V1h4v2" fill="none" stroke="#eee" /><rect y="3" width="12" height="9" rx="1" fill="#f2f2f2" /><path d="M4 5h2v2H4z" fill="#e0552f" /><path d="M6.500 5h2v2h-2z" fill="#76b82a" /><path d="M4 7.500h2v2H4z" fill="#2f8fe0" /><path d="M6.500 7.500h2v2h-2z" fill="#f0b020" /></svg>
      </IconBtn>
      <IconBtn label="Outlook" className={cell}>
        <svg viewBox="0 0 12 12" className="h-3 w-3"><path d="M3 2h9v9H3z" fill="#38a3ec" /><path d="M3 6l4 3 5-4v6H3z" fill="#8bd0fb" /><rect y="3" width="7" height="7" rx="1" fill="#0f63b8" /><circle cx="3.500" cy="6.500" r="1.800" fill="none" stroke="#fff" /></svg>
      </IconBtn>
      <IconBtn label="OBS Studio" className={open}>
        <svg viewBox="0 0 14 14" className="h-[14px] w-[14px]"><circle cx="7" cy="7" r="5.500" fill="#222" stroke="#ddd" /><path d="M7 3a2 2 0 0 0 0 4M4 9a2 2 0 0 0 4-1" fill="none" stroke="#ddd" /><circle cx="10" cy="10" r="3.500" fill="#e00b1c" /></svg>
      </IconBtn>
      <IconBtn label="Photos" className="h-full w-6 border-b-2 border-[#8fc7d8] bg-[#3a3f42]">
        <svg viewBox="0 0 12 12" className="h-3 w-3"><rect width="12" height="12" rx="1" fill="#1f7fe0" /><path d="M0 12l6-7 6 7z" fill="#8ad4ff" /><path d="M8 1l3 1-1 2z" fill="#fff" /></svg>
      </IconBtn>
      <div className="ml-auto flex h-full items-center">
        <svg viewBox="0 0 14 12" className="h-3 w-[14px]"><path d="M1 6c2 3 6 2 7-4 5 2 4 9-2 9-3 0-5-2-5-5z" fill="#f0a030" /><circle cx="9" cy="3" r="3" fill="#e23a30" /></svg>
        <span className="mr-2 ml-[3px] whitespace-nowrap">74°F&nbsp; Clear</span>
        <IconBtn label="Hidden icons" className="w-3"><ChevronUp size={7} /></IconBtn>
        <IconBtn label="Power" className="w-3"><Usb size={8} /></IconBtn>
        <IconBtn label="Microphone" className="w-3"><Mic size={8} fill="currentColor" /></IconBtn>
        <IconBtn label="Network" className="w-3"><Wifi size={8} /></IconBtn>
        <IconBtn label="Volume" className="w-3"><Volume2 size={8} /></IconBtn>
        <div className="w-[36px] text-center text-[6px] leading-[10px]">6:43 PM<br />11/23/2025</div>
        <IconBtn label="Notifications" className="w-[11px] overflow-hidden"><MessageSquare size={10} fill="currentColor" /></IconBtn>
      </div>
    </div>
  );
}

export default function App() {
  return (
    <div className="min-h-screen overflow-hidden bg-black pt-[109px] font-['Open_Sans',sans-serif]">
      <div className="relative">
        <Tabs />
        <AddressBar />
        <TopToolbar />
        <div className="flex">
          <LeftToolbar />
          <main className="min-w-0 flex-1">
            <div className="flex bg-[#7a7c87]">
              <div className="relative min-w-0 flex-1">
                <MainChart />
                <ChartHeader />
                <IconBtn label="Expand pane" className="absolute top-[330px] left-1 h-[11px] w-[15px] border border-[#b8b9c0] text-[#333]"><ChevronDown size={6} /></IconBtn>
                <span className="absolute top-[332px] left-[29px] h-[6px] w-[6px] rounded-full bg-[#5b3fd0]" />
                <div className="absolute top-[392px] left-[6px] flex items-center gap-1 text-[10px] leading-[14px] font-bold text-white"><TvLogo className="h-[11px] w-[15px]" />TradingView</div>
                <svg viewBox="30 577 1201 15" preserveAspectRatio="xMinYMin slice" className="block h-[15px] w-full" fontSize="6" fill="#25262f" textAnchor="middle">
                  <path d="M30 577.500h1201" stroke="#666873" />
                  {times.map(([x, t]) => <text key={x} x={x} y="586">{t}</text>)}
                </svg>
              </div>
              <PriceAxis />
            </div>
            <ChartFooter />
          </main>
          <RightToolbar />
        </div>
        <div className="h-[2px] bg-[#3a3a3a]" />
        <Downloads />
        <PhotoViewer />
      </div>
      <Taskbar />
    </div>
  );
}
